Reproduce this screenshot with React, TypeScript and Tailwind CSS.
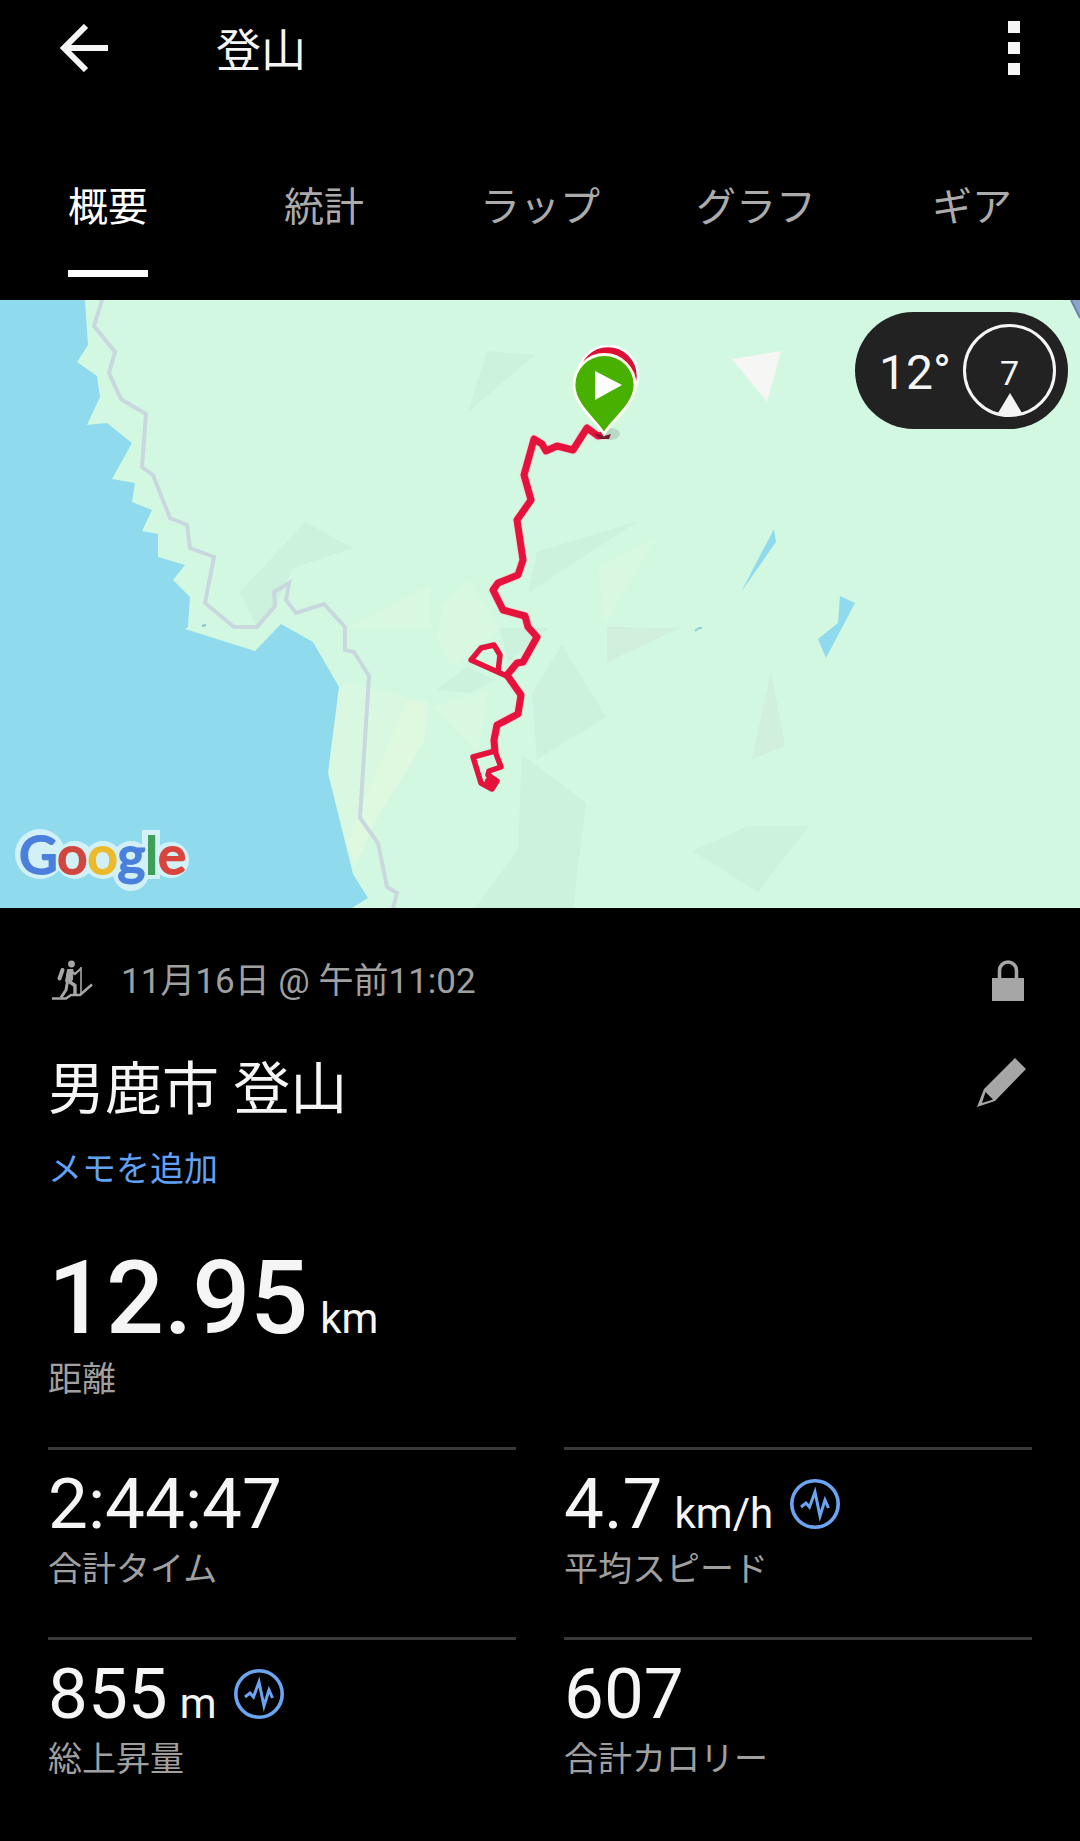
interface StatProps {
  value: string;
  unit?: string;
  label: string;
  chart?: boolean;
}

const tabs = ['概要', '統計', 'ラップ', 'グラフ', 'ギア'];

const stats: StatProps[] = [
  { value: '2:44:47', label: '合計タイム' },
  { value: '4.7', unit: 'km/h', label: '平均スピード', chart: true },
  { value: '855', unit: 'm', label: '総上昇量', chart: true },
  { value: '607', label: '合計カロリー' },
];

function HikerIcon() {
  return (
    <svg viewBox="0 0 41 41" className="w-[41px] h-[41px] shrink-0" fill="none" stroke="#a6a6a6" strokeLinejoin="round" aria-hidden="true">
      <circle cx="19.5" cy="4" r="3.4" fill="#a6a6a6" stroke="none" />
      <path d="M10.500 10L7.500 18.500" strokeWidth="4" strokeLinecap="round" />
      <path d="M15.500 9.500L21 9.500L20.500 19.500L18.500 23L13.500 21.500Z" fill="#a6a6a6" strokeWidth="1" />
      <path d="M19.500 11.500L23 14L29 8.500" strokeWidth="2.200" />
      <path d="M29 7V33" strokeWidth="1.600" />
      <path d="M15.500 21.500L14 30L9 37.500" strokeWidth="3" />
      <path d="M17 21.500L23 25.500V34.500" strokeWidth="3.400" />
      <path d="M0 38.500H14L19 35H28L40 24.500" strokeWidth="2.600" />
    </svg>
  );
}

function ChartIcon() {
  return (
    <svg viewBox="0 0 50 50" className="w-[50px] h-[50px]" fill="none" stroke="#6ba5f2" aria-hidden="true">
      <circle cx="25" cy="25" r="23.200" strokeWidth="3.600" />
      <path d="M11 28L16 24L19.500 28L25 13L30 37L35 21L38.500 29" strokeWidth="3" />
    </svg>
  );
}

function Stat({ value, unit, label, chart }: StatProps) {
  return (
    <div className="border-t-[3px] border-[#3a3a3a] pt-[18px]">
      <div className="flex items-center gap-[17px]">
        <p className="flex items-baseline gap-3">
          <span className="text-[71px] leading-[72px]">{value}</span>
          {unit && <span className="text-[42px] leading-none">{unit}</span>}
        </p>
        {chart && (
          <button type="button" aria-label={`${label}のグラフ`}>
            <ChartIcon />
          </button>
        )}
      </div>
      <p className="mt-[5px] text-[34px] leading-[48px] text-[#a0a0a0]">{label}</p>
    </div>
  );
}

function GoogleLogo() {
  return (
    <>
      <g fill="#d2f1f7">
        <circle cx="40" cy="554" r="25" />
        <circle cx="75" cy="560" r="19" />
        <circle cx="103" cy="560" r="19" />
        <circle cx="131" cy="560" r="19" />
        <circle cx="131" cy="573" r="18" />
        <rect x="142" y="530" width="18" height="49" />
        <circle cx="171" cy="560" r="18" />
      </g>
      <text x="19" y="574" fontSize="53" strokeWidth="2" className="font-['Lato',sans-serif] font-medium">
        <tspan fill="#4a80dc" stroke="#4a80dc">G</tspan>
        <tspan fill="#d0473f" stroke="#d0473f">o</tspan>
        <tspan fill="#ecbb2c" stroke="#ecbb2c">o</tspan>
        <tspan fill="#4a80dc" stroke="#4a80dc">g</tspan>
        <tspan fill="#3f9f58" stroke="#3f9f58">l</tspan>
        <tspan fill="#d9453e" stroke="#d9453e">e</tspan>
      </text>
    </>
  );
}

function RouteMap() {
  return (
    <svg viewBox="0 0 1080 608" className="block w-full" role="img" aria-label="ルート">
      <rect width="1080" height="608" fill="#d2f8e1" />

      {/* terrain */}
      <g fill="#ccf1dc">
        <path d="M487 51L535 55L468 112Z" />
        <path d="M305 222L353 248L293 268L275 306L257 327L240 292Z" />
        <path d="M537 252L638 221L528 293Z" />
        <path d="M607 327L680 328L607 362Z" fill="#d0efdc" />
        <path d="M562 345L606 417L537 459L532 393Z" />
        <path d="M522 455L586 503L573 608H475L518 550Z" />
        <path d="M771 372L785 446L752 459Z" fill="#d0efdc" />
        <path d="M693 551L748 526H809L758 592Z" />
        <path d="M500 328H548L508 362Z" />
        <path d="M467 367L437 390L470 393L495 380Z" />
      </g>
      <g fill="#d9f8e2">
        <path d="M598 268L655 239L605 323Z" />
        <path d="M468 280L442 307L437 340L453 367L500 328Z" />
        <path d="M433 407L488 390L478 453Z" />
        <path d="M350 327L430 285V327Z" />
        <path d="M339 387L345 382L428 402L373 525L355 570L328 473Z" />
      </g>
      <path d="M407 400L428 403L424 442L373 525L355 565L346 540L360 510Z" fill="#dff9e1" />

      {/* water */}
      <path
        d="M0 0H85L88 45L77 62L97 76L100 97L87 125L107 123L132 143L112 179L135 183L132 202L152 210L142 231L158 234V257L185 265L173 280L190 297L188 327L185 329L255 351L281 324L313 342L339 387L328 473L353 574L368 598L352 608H0Z"
        fill="#90daee"
      />
      <path d="M774 229L776 242L741 292Z" fill="#90daee" />
      <path d="M840 296L855 303L826 358L818 339L838 323Z" fill="#90daee" />
      <path d="M695 331L699 328L702 328" fill="none" stroke="#8fcfd6" strokeWidth="2" />
      <path d="M202 326L206 325" stroke="#8fbfc6" strokeWidth="2" />
      <path d="M781 51L732 59L767 102Z" fill="#f6f6f4" />
      <path d="M1071 0H1080V18Z" fill="#8aa6d0" />
      <path d="M1071 0L1080 18" stroke="#6d7fa8" strokeWidth="2" />

      {/* road */}
      <path
        d="M102 0L94 26L115 52L109 73L121 99L146 114L142 167L153 175L170 218L187 225L190 248L214 257L205 303L234 327H257L275 306L274 292L289 283L286 300L296 313L324 304L345 327V350L354 352L369 376L360 518L378 543L387 587L397 593L393 608"
        fill="none"
        stroke="#c9d8de"
        strokeWidth="4"
      />

      {/* track */}
      <ellipse cx="610" cy="134" rx="10" ry="6" fill="#8fa99b" opacity="0.4" />
      <g fill="none" stroke="#ffc9d0" strokeWidth="9" strokeLinejoin="round" opacity="0.7">
        <path d="M604 135L598 136L587 128L573 150L557 146L546 151L542 144L534 139L524 175L531 200L517 220L523 260L518 275L498 283L493 290L503 310L525 316L528 327L537 337L523 362L517 363L507 375L521 395L518 414L497 425L494 440L495 452" />
      </g>
      <g fill="none" stroke="#e5123b" strokeLinejoin="round">
        <path
          d="M604 135L598 136L587 128L573 150L557 146L546 151L542 144L534 139L524 175L531 200L517 220L523 260L518 275L498 283L493 290L503 310L525 316L528 327L537 337L523 362L517 363L507 375L521 395L518 414L497 425L494 440L495 452"
          strokeWidth="7"
        />
        <path d="M509 377L471 360L481 348L494 345L500 355L498 372" strokeWidth="5.500" />
        <path d="M495 451L473 457L481 483L492 489L497 481L488 475L489 471L501 467L495 451" strokeWidth="5.500" />
        <circle cx="490" cy="481" r="4.500" fill="#e5123b" />
      </g>
      <path d="M604 136L594 133L600 139H609L611 134Z" fill="#7c1730" />

      {/* pins */}
      <path d="M608 127C601 114 578 96 578 76A30 30 0 0 1 638 76C638 96 615 114 608 127Z" fill="#dc0f35" stroke="#fff" strokeWidth="2.500" />
      <path d="M604 134C596 120 574 105 574 85A30.500 30.500 0 0 1 635 85C635 105 612 120 604 134Z" fill="#47b000" stroke="#fdfff0" strokeWidth="2.800" />
      <path d="M595 71L622 85L595 100Z" fill="#fff" />

      <GoogleLogo />
    </svg>
  );
}

function WeatherBadge() {
  return (
    <div className="absolute top-3 right-3 flex h-[117px] items-center gap-3 rounded-full bg-[#222] pr-3 pl-6">
      <span className="pt-1 text-[48px] leading-none">12°</span>
      <div className="relative flex h-[93px] w-[93px] items-center justify-center rounded-full border-[3px] border-[#f5f5f5]">
        <span className="pt-1 text-[34px] leading-none">7</span>
        <svg viewBox="0 0 24 22" className="absolute -bottom-px h-[22px] w-6" fill="#f5f5f5" aria-hidden="true">
          <path d="M12 0L24 20Q12 24 0 20Z" />
        </svg>
      </div>
    </div>
  );
}

export default function App() {
  return (
    <div className="min-h-screen bg-black pb-12 font-['Roboto','Noto_Sans_CJK_JP',sans-serif] text-[#f5f5f5]" lang="ja">
      <header className="flex h-24 items-center pr-[60px] pl-[60px]">
        <button type="button" aria-label="戻る" className="mr-[108px]">
          <svg viewBox="0 0 48 48" className="h-12 w-12" fill="none" stroke="#f5f5f5" strokeWidth="6" aria-hidden="true">
            <path d="M26 2L4 24L26 46M4 24H48" />
          </svg>
        </button>
        <h1 className="flex-1 pt-2 text-[45px] leading-[60px]">登山</h1>
        <button type="button" aria-label="メニュー" className="flex flex-col gap-[9px]">
          <span className="h-3 w-3 bg-[#f5f5f5]" />
          <span className="h-3 w-3 bg-[#f5f5f5]" />
          <span className="h-3 w-3 bg-[#f5f5f5]" />
        </button>
      </header>

      <nav className="grid grid-cols-5 justify-items-center pt-[82px] pb-[23px]">
        {tabs.map((tab, index) => (
          <button
            key={tab}
            type="button"
            className={
              index === 0
                ? 'border-b-[7px] border-white pb-8 text-[40px] leading-[60px] text-white'
                : 'border-b-[7px] border-transparent pb-8 text-[40px] leading-[60px] text-[#ababab]'
            }
          >
            {tab}
          </button>
        ))}
      </nav>

      <div className="relative">
        <RouteMap />
        <WeatherBadge />
      </div>

      <main className="px-12 pt-12">
        <div className="flex h-12 items-center pl-1 text-[#a0a0a0]">
          <HikerIcon />
          <p className="ml-7 flex-1 pt-1 text-[35px] leading-[48px]">11月16日 @ 午前11:02</p>
          <svg viewBox="0 0 32 41" className="mr-2 h-[41px] w-8" aria-label="非公開" role="img">
            <rect y="18" width="32" height="23" fill="#a6a6a6" />
            <path d="M7.500 19V10.500A8.500 8.500 0 0 1 24.500 10.500V19" fill="none" stroke="#a6a6a6" strokeWidth="3.600" />
          </svg>
        </div>

        <div className="mt-12 flex h-[72px] items-center justify-between">
          <h2 className="pt-1 text-[57px] leading-[72px]">男鹿市 登山</h2>
          <button type="button" aria-label="名前を編集" className="mr-[6px] mb-3">
            <svg viewBox="0 0 49 49" className="h-[49px] w-[49px]" fill="#a6a6a6" aria-hidden="true">
              <path fillRule="evenodd" d="M38 0L49 11L18 43L0 49L7 31ZM8.500 34L5 45L16 41.500Z" />
            </svg>
          </button>
        </div>
        <a href="#memo" className="mt-[21px] block w-fit text-[34px] leading-[48px] text-[#62a2f5]">
          メモを追加
        </a>

        <p className="mt-[53px] flex items-baseline gap-3">
          <span className="text-[102px] leading-[104px] font-medium">12.95</span>
          <span className="text-[42px] leading-none">km</span>
        </p>
        <p className="mt-[5px] text-[34px] leading-[48px] text-[#a0a0a0]">距離</p>

        <section className="mt-[44px] grid grid-cols-2 gap-x-12 gap-y-[44px]">
          {stats.map((stat) => (
            <Stat key={stat.label} {...stat} />
          ))}
        </section>
      </main>
    </div>
  );
}
